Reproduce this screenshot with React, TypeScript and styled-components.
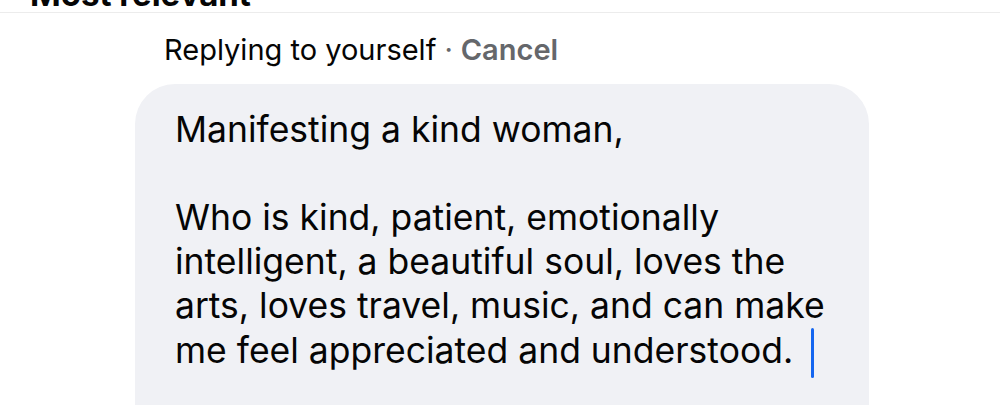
import React from "react";
import styled, { createGlobalStyle } from "styled-components";

const Global = createGlobalStyle`
  html, body { margin: 0; padding: 0; background: #ffffff; }
  body { font-family: Inter, "Noto Sans", sans-serif; overflow: hidden; }
`;

const Page = styled.div`
  width: 1000px;
  height: 405px;
  overflow: hidden;
  background: #ffffff;
`;

const Header = styled.div`
  height: 12px;
  overflow: hidden;
  border-bottom: 1px solid #ececec;
  padding-left: 30px;
  display: flex;
  align-items: flex-end;
`;

const HeaderTitle = styled.div`
  font-size: 33px;
  font-weight: 700;
  color: #050505;
  line-height: 33px;
  margin-bottom: 1px;
`;

const ReplyBar = styled.div`
  display: flex;
  align-items: baseline;
  padding: 19px 0 0 164px;
  height: 71px;
  box-sizing: border-box;
  font-size: 29px;
  line-height: 36px;
`;

const ReplyLabel = styled.span`
  color: #050505;
`;

const Dot = styled.span`
  color: #65676b;
  margin: 0 8px;
`;

const CancelLink = styled.span`
  color: #65676b;
  font-weight: 600;
`;

const Bubble = styled.div`
  margin-left: 135px;
  width: 734px;
  height: 360px;
  background: #f0f1f5;
  border-radius: 40px;
  box-sizing: border-box;
  padding: 24px 30px 0 40px;
`;

const Paragraph = styled.p`
  margin: 0;
  font-size: 35.5px;
  line-height: 44px;
  color: #050505;
  white-space: nowrap;
`;

const Spacer = styled.div`
  height: 44px;
`;

const Caret = styled.span`
  display: inline-block;
  width: 3px;
  height: 50px;
  border-radius: 2px;
  background: #1466f0;
  margin: 0 0 -15px 18px;
`;

export default function App() {
  return (
    <Page>
      <Global />
      <Header>
        <HeaderTitle>Most relevant</HeaderTitle>
      </Header>
      <ReplyBar>
        <ReplyLabel>Replying to yourself</ReplyLabel>
        <Dot>·</Dot>
        <CancelLink>Cancel</CancelLink>
      </ReplyBar>
      <Bubble>
        <Paragraph>Manifesting a kind woman,</Paragraph>
        <Spacer />
        <Paragraph>
          Who is kind, patient, emotionally
          <br />
          intelligent, a beautiful soul, loves the
          <br />
          arts, loves travel, music, and can make
          <br />
          me feel appreciated and understood.
          <Caret />
        </Paragraph>
      </Bubble>
    </Page>
  );
}
